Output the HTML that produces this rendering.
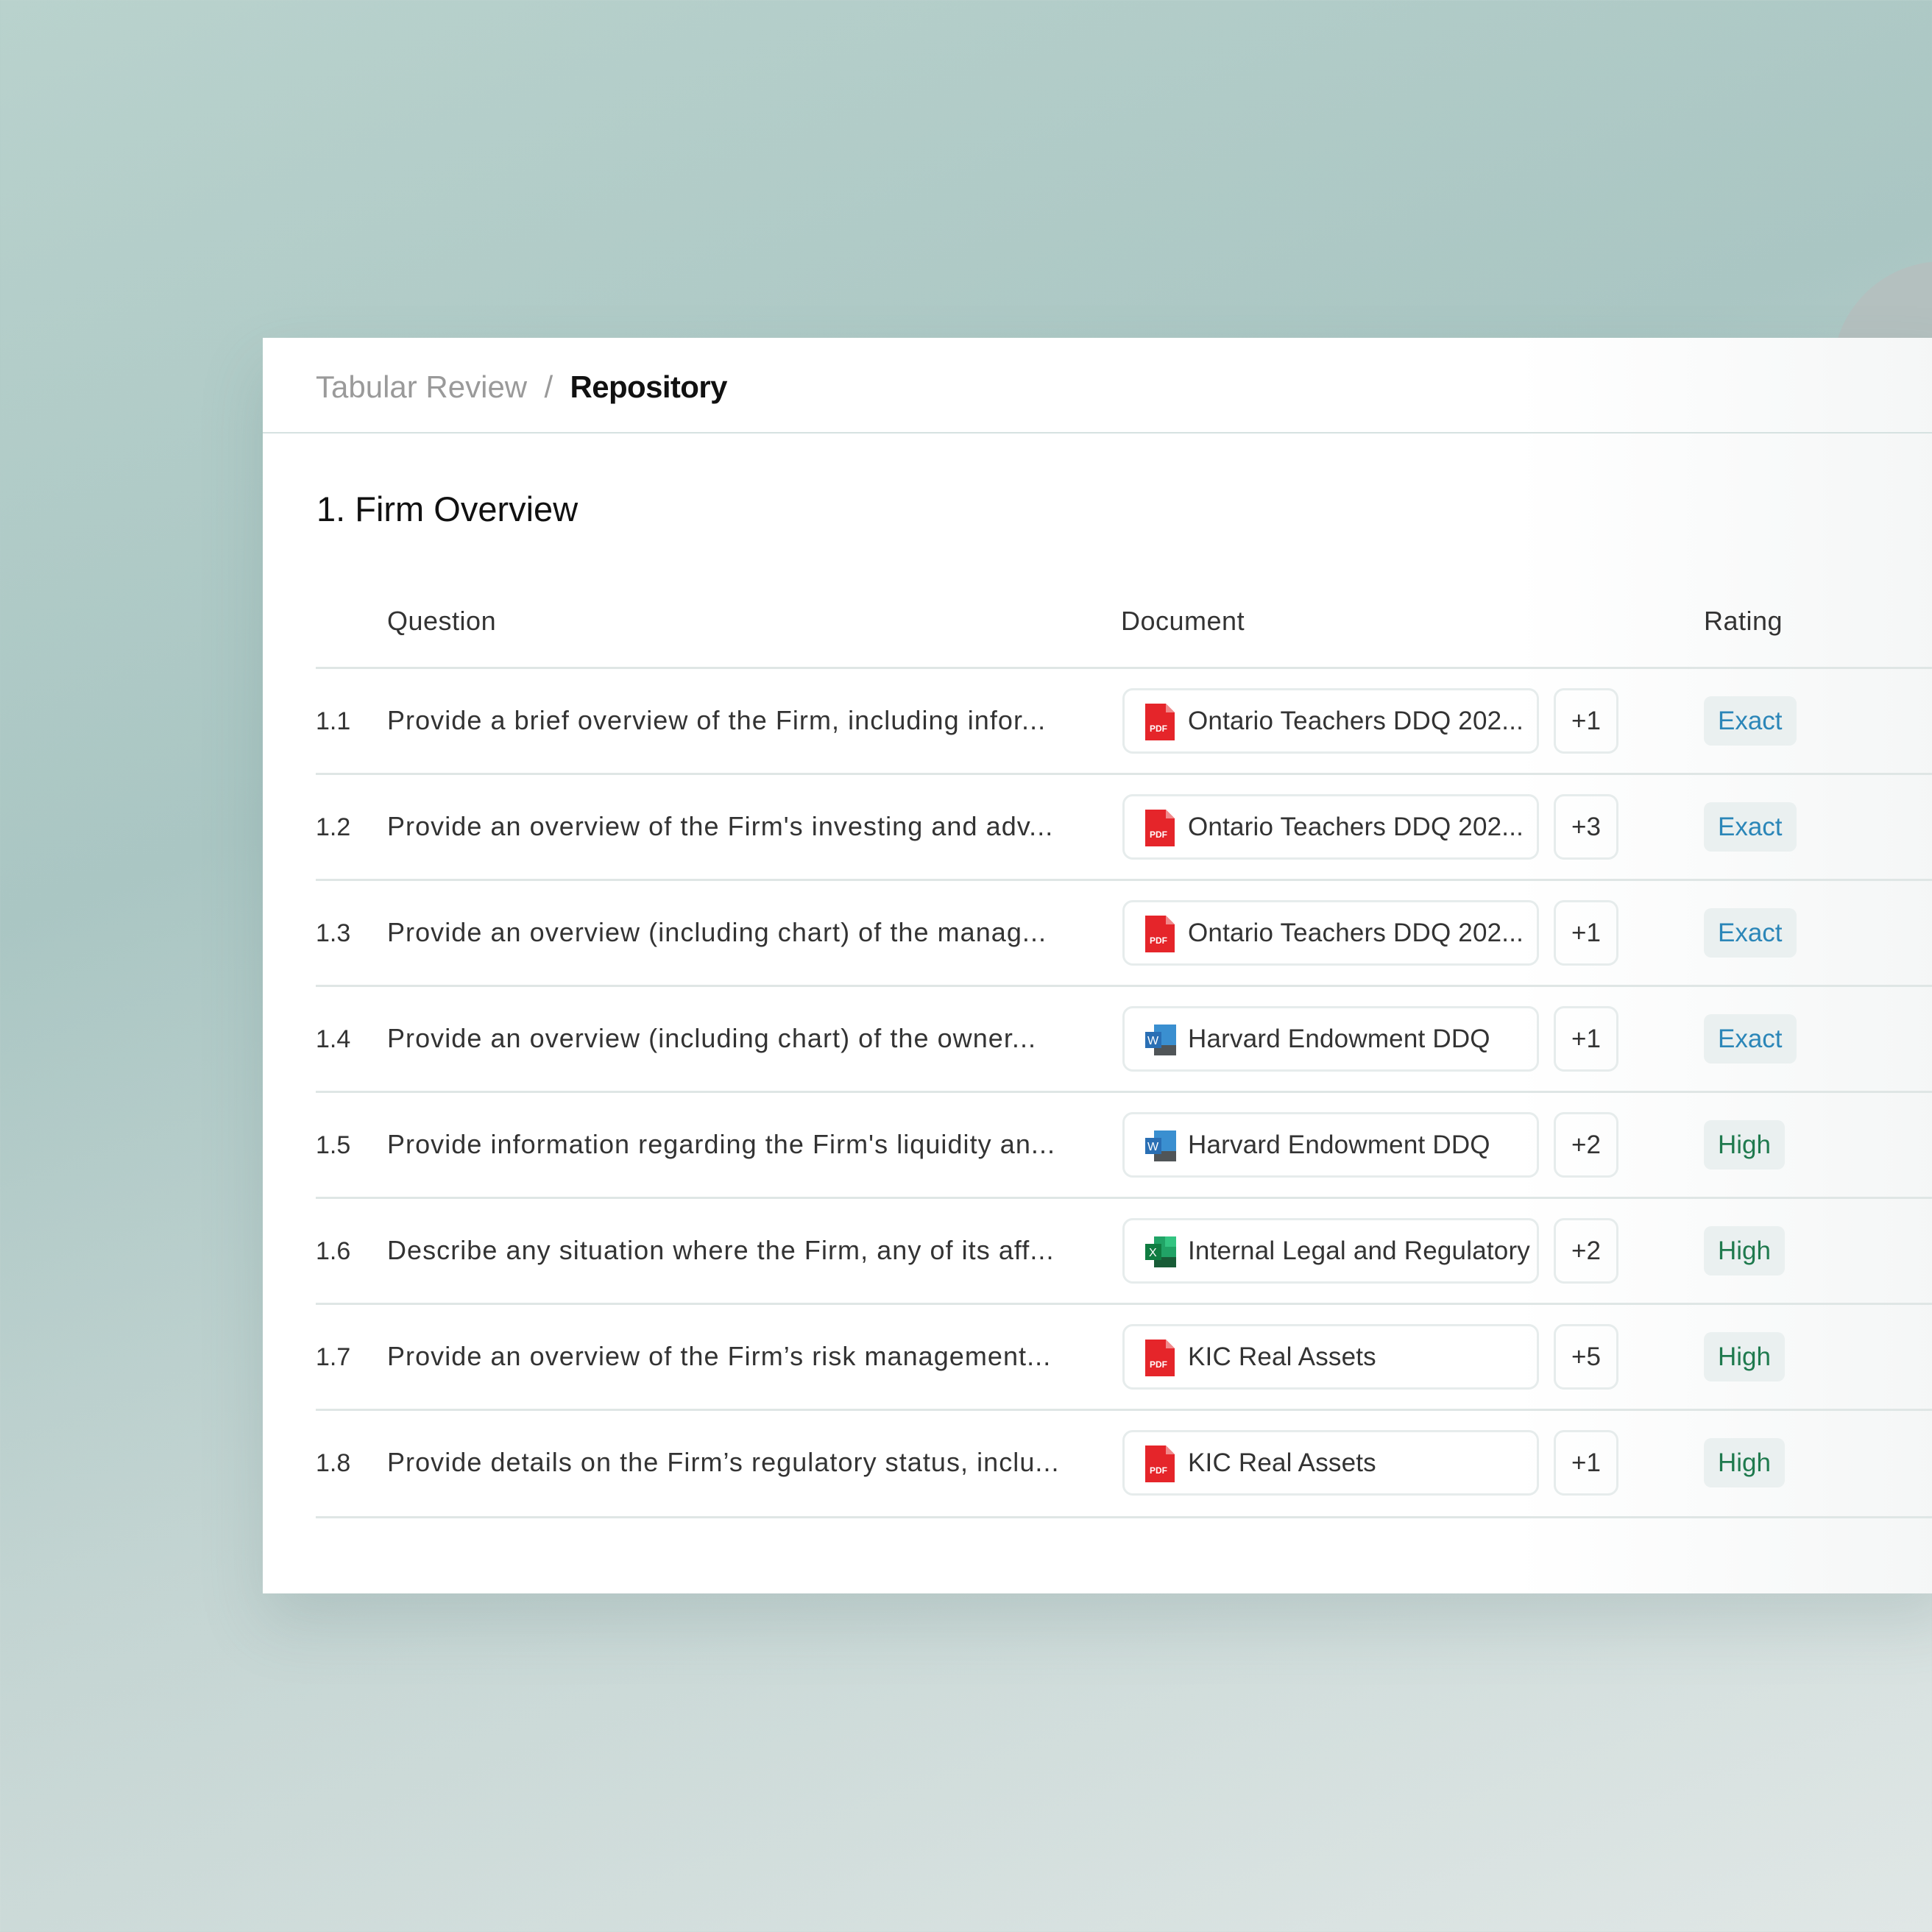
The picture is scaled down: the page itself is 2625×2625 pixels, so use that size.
<!DOCTYPE html>
<html><head><style>
*{margin:0;padding:0;box-sizing:border-box}
body{width:2625px;height:2625px;overflow:hidden;position:relative;font-family:"Liberation Sans",sans-serif;
background:linear-gradient(160deg,#b9d2cd 0%,#aac6c3 35%,#c6d6d4 65%,#e0e7e6 100%);}
.blob{position:absolute;left:2490px;top:355px;width:300px;height:300px;border-radius:50%;background:#b4c0bf}
.card{position:absolute;left:357px;top:459px;width:2300px;height:1706px;background:#fff;box-shadow:0 40px 80px rgba(80,110,110,.18)}
.fade{position:absolute;right:0;top:0;width:600px;height:100%;background:linear-gradient(90deg,rgba(245,247,247,0),#f4f6f6)}
.hdr{position:absolute;left:0;top:0;right:0;height:130px;border-bottom:2px solid #d6e2e1}
.bc{position:absolute;left:72px;top:43px;font-size:42px;color:#9a9a9a}
.bc b{color:#111;font-weight:bold;letter-spacing:-0.6px}
.title{position:absolute;left:73px;top:205px;font-size:47px;color:#111}
.th{position:absolute;top:364px;font-size:36px;color:#333;letter-spacing:.5px}
.row{position:absolute;left:72px;width:2300px;height:144px;border-top:3px solid #dfe6e5}
.row .n{position:absolute;left:0;top:52px;font-size:34px;color:#333}
.row .q{position:absolute;left:97px;top:49px;font-size:36px;color:#333;letter-spacing:1.05px}
.doc{position:absolute;left:1096px;top:26px;width:566px;height:89px;border:3px solid #e6ecec;border-radius:14px;overflow:hidden;white-space:nowrap}
.doc span{position:absolute;left:86px;top:22px;font-size:35px;color:#333;letter-spacing:.2px}
.doc svg{position:absolute;left:28px;top:18px}
.plus{position:absolute;left:1682px;top:26px;width:88px;height:89px;border:3px solid #e6ecec;border-radius:14px;text-align:center;line-height:83px;font-size:35px;color:#333}
.bd{position:absolute;left:1886px;top:37px;height:67px;border-radius:10px;background:#eaf0f0;font-size:35px;line-height:67px;padding:0 19px}
.ex{color:#2b86b8}.hi{color:#1f7a4e}
.last{position:absolute;left:72px;top:1601px;width:2300px;border-top:3px solid #dfe6e5}
</style></head><body>
<div class="blob"></div>
<div class="card">
<div class="fade"></div>
<div class="hdr"><div class="bc">Tabular Review &nbsp;/&nbsp; <b>Repository</b></div></div>
<div class="title">1. Firm Overview</div>
<div class="th" style="left:169px">Question</div>
<div class="th" style="left:1166px">Document</div>
<div class="th" style="left:1958px">Rating</div>

<div class="row" style="top:447px"><div class="n">1.1</div><div class="q">Provide a brief overview of the Firm, including infor...</div>
<div class="doc"><svg width="40" height="50"><path d="M0 0H28L40 12V50H0Z" fill="#e5252a"/><path d="M28 0V12H40Z" fill="#f08a8c"/><text x="6" y="38" font-size="12" fill="#fff" font-family="Liberation Sans" font-weight="bold">PDF</text></svg><span>Ontario Teachers DDQ 202...</span></div>
<div class="plus">+1</div><div class="bd ex">Exact</div></div>

<div class="row" style="top:591px"><div class="n">1.2</div><div class="q">Provide an overview of the Firm's investing and adv...</div>
<div class="doc"><svg width="40" height="50"><path d="M0 0H28L40 12V50H0Z" fill="#e5252a"/><path d="M28 0V12H40Z" fill="#f08a8c"/><text x="6" y="38" font-size="12" fill="#fff" font-family="Liberation Sans" font-weight="bold">PDF</text></svg><span>Ontario Teachers DDQ 202...</span></div>
<div class="plus">+3</div><div class="bd ex">Exact</div></div>

<div class="row" style="top:735px"><div class="n">1.3</div><div class="q">Provide an overview (including chart) of the manag...</div>
<div class="doc"><svg width="40" height="50"><path d="M0 0H28L40 12V50H0Z" fill="#e5252a"/><path d="M28 0V12H40Z" fill="#f08a8c"/><text x="6" y="38" font-size="12" fill="#fff" font-family="Liberation Sans" font-weight="bold">PDF</text></svg><span>Ontario Teachers DDQ 202...</span></div>
<div class="plus">+1</div><div class="bd ex">Exact</div></div>

<div class="row" style="top:879px"><div class="n">1.4</div><div class="q">Provide an overview (including chart) of the owner...</div>
<div class="doc"><svg width="46" height="50" style="top:20px"><rect x="12" y="2" width="30" height="42" fill="#3a8fd0"/><rect x="12" y="30" width="30" height="14" fill="#505558"/><rect x="0" y="12" width="22" height="22" fill="#2a6fb4"/><text x="3" y="29" font-size="16" fill="#fff" font-family="Liberation Sans">W</text></svg><span>Harvard Endowment DDQ</span></div>
<div class="plus">+1</div><div class="bd ex">Exact</div></div>

<div class="row" style="top:1023px"><div class="n">1.5</div><div class="q">Provide information regarding the Firm's liquidity an...</div>
<div class="doc"><svg width="46" height="50" style="top:20px"><rect x="12" y="2" width="30" height="42" fill="#3a8fd0"/><rect x="12" y="30" width="30" height="14" fill="#505558"/><rect x="0" y="12" width="22" height="22" fill="#2a6fb4"/><text x="3" y="29" font-size="16" fill="#fff" font-family="Liberation Sans">W</text></svg><span>Harvard Endowment DDQ</span></div>
<div class="plus">+2</div><div class="bd hi">High</div></div>

<div class="row" style="top:1167px"><div class="n">1.6</div><div class="q">Describe any situation where the Firm, any of its aff...</div>
<div class="doc"><svg width="46" height="50" style="top:20px"><rect x="12" y="2" width="30" height="42" fill="#21a366"/><rect x="27" y="2" width="15" height="14" fill="#33c481"/><rect x="12" y="30" width="30" height="14" fill="#185c37"/><rect x="0" y="12" width="22" height="22" fill="#107c41"/><text x="5" y="29" font-size="16" fill="#fff" font-family="Liberation Sans">X</text></svg><span>Internal Legal and Regulatory</span></div>
<div class="plus">+2</div><div class="bd hi">High</div></div>

<div class="row" style="top:1311px"><div class="n">1.7</div><div class="q">Provide an overview of the Firm’s risk management...</div>
<div class="doc"><svg width="40" height="50"><path d="M0 0H28L40 12V50H0Z" fill="#e5252a"/><path d="M28 0V12H40Z" fill="#f08a8c"/><text x="6" y="38" font-size="12" fill="#fff" font-family="Liberation Sans" font-weight="bold">PDF</text></svg><span>KIC Real Assets</span></div>
<div class="plus">+5</div><div class="bd hi">High</div></div>

<div class="row" style="top:1455px"><div class="n">1.8</div><div class="q">Provide details on the Firm’s regulatory status, inclu...</div>
<div class="doc"><svg width="40" height="50"><path d="M0 0H28L40 12V50H0Z" fill="#e5252a"/><path d="M28 0V12H40Z" fill="#f08a8c"/><text x="6" y="38" font-size="12" fill="#fff" font-family="Liberation Sans" font-weight="bold">PDF</text></svg><span>KIC Real Assets</span></div>
<div class="plus">+1</div><div class="bd hi">High</div></div>
<div class="last"></div>
</div>
</body></html>
